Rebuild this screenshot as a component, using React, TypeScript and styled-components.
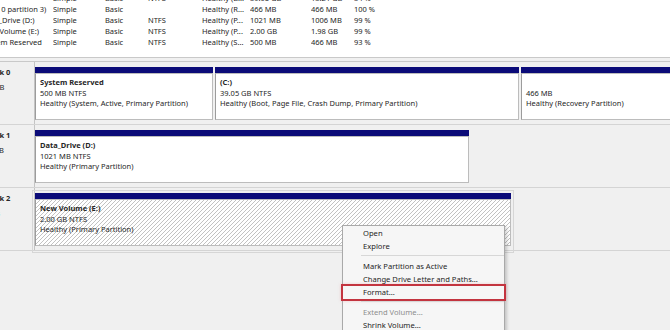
import React from "react"
import styled, { createGlobalStyle } from "styled-components"

const GlobalStyle = createGlobalStyle`
  html, body {
    margin: 0;
    padding: 0;
    background: #f0f0f0;
  }
  body {
    font-family: "Noto Sans", "Open Sans", sans-serif;
  }
`

const Window = styled.div`
  position: relative;
  width: 670px;
  height: 330px;
  overflow: hidden;
  background: #f0f0f0;
  color: #262626;
  font-size: 7.5px;
`

const VolumeList = styled.div`
  height: 57px;
  background: #fff;
  border-bottom: 1px solid #c9c9c9;
  overflow: hidden;
`

const ListBody = styled.div`
  margin-top: -7px;
`

const ListRow = styled.div`
  display: grid;
  grid-template-columns: 71px 52px 43px 54px 48px 61px 43px 1fr;
  height: 11px;
  line-height: 11px;
  margin-left: -18px;
  white-space: nowrap;
`

const Cell = styled.span`
  overflow: hidden;
`

const Splitter = styled.div`
  height: 3px;
  border-bottom: 1px solid #c9c9c9;
`

const DiskArea = styled.div`
  display: flex;
  flex-direction: column;
`

const DiskRow = styled.div`
  display: grid;
  grid-template-columns: 35px 1fr;
  height: 62px;
  border-bottom: 1px solid #d4d4d4;
`

const DiskLabel = styled.div`
  border-right: 1px solid #c4c4c4;
  overflow: hidden;
  padding-top: 5px;
  white-space: nowrap;
`

const LabelInner = styled.div`
  margin-left: -27px;
`

const LabelName = styled.div`
  display: flex;
  align-items: center;
  gap: 3px;
  height: 10px;
  line-height: 10px;
  font-weight: 700;
`

const LabelLine = styled.div`
  margin-top: 5px;
  line-height: 10px;
`

const DiskIcon = styled.svg`
  width: 12px;
  height: 9px;
`

const Partitions = styled.div`
  display: flex;
  gap: 2px;
  padding-top: 5px;
`

const Partition = styled.div<{ $w: number; $selected?: boolean }>`
  flex: 0 0 ${({ $w }) => $w}px;
  display: flex;
  flex-direction: column;
  outline: ${({ $selected }) => ($selected ? "1px solid #d6d6d6" : "none")};
  outline-offset: 2px;
`

const PartHeader = styled.div`
  height: 6px;
  background: #0b0b78;
`

const PartBody = styled.div<{ $hatched?: boolean }>`
  height: 47px;
  box-sizing: border-box;
  padding: 3px 4px 0;
  border: 1px solid #bcbcbc;
  border-left-color: #9c9c9c;
  background: ${({ $hatched }) =>
    $hatched
      ? "linear-gradient(to bottom right, #ffffff calc(50% - 0.7px), #c2c2c2 50%, #ffffff calc(50% + 0.7px)) 0 0 / 4px 4px"
      : "#ffffff"};
  line-height: 10.5px;
  white-space: nowrap;
  overflow: hidden;
`

const PartName = styled.div`
  height: 10.5px;
  font-weight: 700;
`

const ContextMenu = styled.div`
  position: absolute;
  left: 342px;
  top: 225px;
  width: 161px;
  height: 120px;
  padding-top: 1px;
  background: #f6f6f6;
  border: 1px solid #a9a9a9;
  box-shadow: 2px 2px 3px rgba(0, 0, 0, 0.18);
  font-size: 7.6px;
`

const MenuItem = styled.div<{ $disabled?: boolean; $marked?: boolean }>`
  height: 13px;
  line-height: 13px;
  padding-left: 20px;
  color: ${({ $disabled }) => ($disabled ? "#8e8e8e" : "#1e1e1e")};
  outline: ${({ $marked }) => ($marked ? "2px solid #c3343f" : "none")};
  box-shadow: ${({ $marked }) => ($marked ? "0 0 3px 2px rgba(230, 120, 130, 0.35)" : "none")};
`

const MenuSeparator = styled.div`
  height: 5px;
  margin-left: 18px;
  &::after {
    content: "";
    display: block;
    margin-top: 2px;
    border-top: 1px solid #d7d7d7;
  }
`

const volumes = [
  ["(C:)", "Simple", "Basic", "NTFS", "Healthy (B...", "39.05 GB", "13.21 GB", "34 %"],
  ["(Disk 0 partition 3)", "Simple", "Basic", "", "Healthy (R...", "466 MB", "466 MB", "100 %"],
  ["Data_Drive (D:)", "Simple", "Basic", "NTFS", "Healthy (P...", "1021 MB", "1006 MB", "99 %"],
  ["New Volume (E:)", "Simple", "Basic", "NTFS", "Healthy (P...", "2.00 GB", "1.98 GB", "99 %"],
  ["System Reserved", "Simple", "Basic", "NTFS", "Healthy (S...", "500 MB", "466 MB", "93 %"],
]

type Part = { w: number; name?: string; size: string; status: string; hatched?: boolean; selected?: boolean }

const disks: { name: string; size: string; parts: Part[] }[] = [
  {
    name: "Disk 0",
    size: "40.00 GB",
    parts: [
      { w: 178, name: "System Reserved", size: "500 MB NTFS", status: "Healthy (System, Active, Primary Partition)" },
      { w: 304, name: " (C:)", size: "39.05 GB NTFS", status: "Healthy (Boot, Page File, Crash Dump, Primary Partition)" },
      { w: 200, size: "466 MB", status: "Healthy (Recovery Partition)" },
    ],
  },
  {
    name: "Disk 1",
    size: "1023 MB",
    parts: [{ w: 434, name: "Data_Drive  (D:)", size: "1021 MB NTFS", status: "Healthy (Primary Partition)" }],
  },
  {
    name: "Disk 2",
    size: "2.00 GB",
    parts: [
      { w: 476, name: "New Volume  (E:)", size: "2.00 GB NTFS", status: "Healthy (Primary Partition)", hatched: true, selected: true },
    ],
  },
]

const HardDisk = () => (
  <DiskIcon viewBox="0 0 12 9">
    <rect x="0.5" y="1.5" width="11" height="6" fill="#c8c8c8" stroke="#6a6a6a" />
    <rect x="8" y="4" width="2" height="1.5" fill="#3a9a3a" />
  </DiskIcon>
)

export default function App() {
  return (
    <Window>
      <GlobalStyle />
      <VolumeList>
        <ListBody>
          {volumes.map((row, i) => (
            <ListRow key={i}>
              {row.map((c, j) => (
                <Cell key={j}>{c}</Cell>
              ))}
            </ListRow>
          ))}
        </ListBody>
      </VolumeList>
      <Splitter />
      <DiskArea>
        {disks.map((d) => (
          <DiskRow key={d.name}>
            <DiskLabel>
              <LabelInner>
                <LabelName>
                  <HardDisk />
                  {d.name}
                </LabelName>
                <LabelLine>{d.size}</LabelLine>
              </LabelInner>
            </DiskLabel>
            <Partitions>
              {d.parts.map((p, i) => (
                <Partition key={i} $w={p.w} $selected={p.selected}>
                  <PartHeader />
                  <PartBody $hatched={p.hatched}>
                    <PartName>{p.name}</PartName>
                    <div>{p.size}</div>
                    <div>{p.status}</div>
                  </PartBody>
                </Partition>
              ))}
            </Partitions>
          </DiskRow>
        ))}
      </DiskArea>
      <ContextMenu>
        <MenuItem>Open</MenuItem>
        <MenuItem>Explore</MenuItem>
        <MenuSeparator />
        <MenuItem>Mark Partition as Active</MenuItem>
        <MenuItem>Change Drive Letter and Paths...</MenuItem>
        <MenuItem $marked>Format...</MenuItem>
        <MenuSeparator />
        <MenuItem $disabled>Extend Volume...</MenuItem>
        <MenuItem>Shrink Volume...</MenuItem>
      </ContextMenu>
    </Window>
  )
}
